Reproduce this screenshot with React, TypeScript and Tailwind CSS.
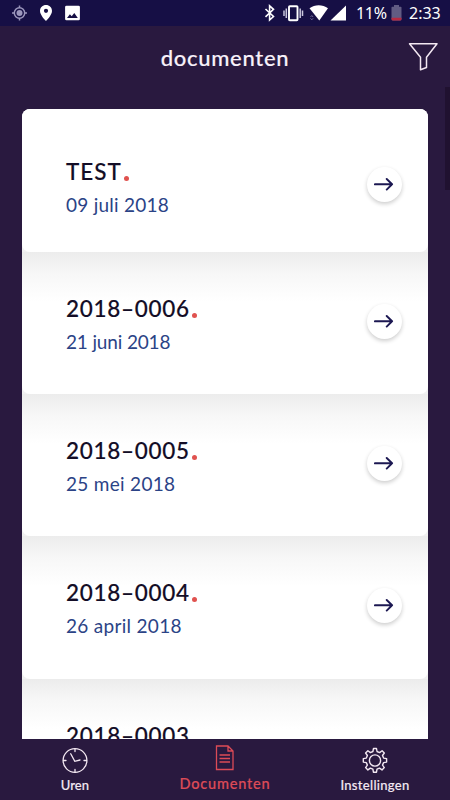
import React from "react";

type Doc = { title: string; date: string; titleSpacing: string; dateSpacing: string };

const docs: Doc[] = [
  { title: "TEST", date: "09 juli 2018", titleSpacing: "tracking-[1px]", dateSpacing: "tracking-[0.25px]" },
  { title: "2018–0006", date: "21 juni 2018", titleSpacing: "tracking-[0.7px]", dateSpacing: "tracking-[-0.15px]" },
  { title: "2018–0005", date: "25 mei 2018", titleSpacing: "tracking-[0.7px]", dateSpacing: "tracking-[0.3px]" },
  { title: "2018–0004", date: "26 april 2018", titleSpacing: "tracking-[0.7px]", dateSpacing: "tracking-[0.3px]" },
];

function StatusBar() {
  return (
    <div className="flex h-[26px] shrink-0 items-center bg-[#160f45] text-white">
      <svg width="90" height="26" viewBox="0 0 90 26" fill="none">
        <g stroke="#9c97bd" strokeWidth="1.5">
          <circle cx="19.5" cy="13" r="5.2" />
          <path d="M19.5 5.5v2.5M19.5 18v2.5M12 13h2.5M24.5 13H27" />
        </g>
        <circle cx="19.5" cy="13" r="3" fill="#9c97bd" />
        <path fillRule="evenodd" fill="#fff" d="M46 5c-3.4 0-6 2.6-6 5.900 0 4.200 6 10.100 6 10.100s6-5.900 6-10.100C52 7.600 49.400 5 46 5Zm0 3.700a2.100 2.100 0 1 1 0 4.200 2.100 2.100 0 0 1 0-4.200Z" />
        <path fillRule="evenodd" fill="#fff" d="M66.500 5.700h12q1.400 0 1.400 1.400v11.800q0 1.400-1.400 1.400h-12q-1.400 0-1.400-1.400V7.100q0-1.400 1.400-1.400ZM67 18h10.800l-3.500-4.900-2.600 3.200-1.800-2Z" />
      </svg>
      <svg className="ml-auto" width="94" height="26" viewBox="0 0 94 26" fill="none">
        <path d="m15.500 9 8 7.500-3.900 3.500V5.800l3.900 3.500-8 7.500" transform="translate(-2)" stroke="#fff" strokeWidth="1.600" />
        <rect x="37" y="6.200" width="8.500" height="14" rx="0.800" stroke="#fff" strokeWidth="1.900" />
        <path d="M34.300 8.500v9.500M48.200 8.500v9.500M32 10.500v5.500M50.500 10.500v5.500" stroke="#c9c6dd" strokeWidth="1.500" />
        <path d="M57.500 8.300c5.400-4 13-4 18.500 0L67.300 20.500Z" fill="#fff" />
        <path d="M94 5.500V20.500H78.500Z" fill="#fff" />
        <path d="m58.500 17 1.300-1.500 1.300 1.500m-2.600 1.300 1.300 1.500 1.300-1.500" stroke="#77729d" strokeWidth="0.900" />
      </svg>
      <span className="ml-[10px] w-[33px] whitespace-nowrap font-['Noto_Sans',sans-serif] text-[16px] leading-[27px] tracking-[-0.3px]">11%</span>
      <svg className="ml-[2px]" width="11" height="26" viewBox="0 0 11 26">
        <path d="M3 5h5v1.800h1.700q.8 0 .8.800V19q0 1.500-1.500 1.500H2Q.5 20.500.5 19V7.600q0-.8.800-.8H3Z" fill="#625c83" />
        <path d="M.5 17.800h10V19q0 1.500-1.500 1.500H2Q.5 20.500.5 19Z" fill="#b72a42" />
      </svg>
      <span className="ml-[7px] w-[41px] whitespace-nowrap font-['Noto_Sans',sans-serif] text-[16px] leading-[27px]">2:33</span>
    </div>
  );
}

function ArrowButton() {
  return (
    <button aria-label="Open" className="flex size-[35px] items-center justify-center rounded-full bg-white shadow-[0_2px_4px_rgba(0,0,0,0.2)]">
      <svg width="21" height="15" viewBox="0 0 21 15" fill="none" stroke="#1c1852" strokeWidth="1.900" strokeLinecap="round" strokeLinejoin="round">
        <path d="M0.900 7.300h17.200M12.700 2l5.400 5.300-5.400 5.300" />
      </svg>
    </button>
  );
}

function Dot() {
  return <span className="mb-[6px] ml-[2px] size-[5px] rounded-full bg-[#e0524f]" />;
}

function DocRow({ doc, first }: { doc: Doc; first: boolean }) {
  return (
    <div className={first ? "h-[143px] shrink-0 bg-[#f1f1f1]" : "h-[142.200px] shrink-0 bg-[#f1f1f1]"}>
      <div
        className={
          first
            ? "flex h-full items-start justify-between rounded-lg bg-white pt-[48px] pr-[26px] pl-[44px]"
            : "flex h-full items-start justify-between rounded-b-lg bg-linear-to-b from-[#ececec] via-[#f7f7f7] via-15% to-white to-35% pt-[42px] pr-[26px] pl-[44px]"
        }
      >
        <div>
          <div className="flex h-[30px] items-end">
            <span className={"text-[22.500px] leading-[30px] font-medium text-[#130d26] [-webkit-text-stroke:0.15px_#130d26] " + doc.titleSpacing}>{doc.title}</span>
            <Dot />
          </div>
          <div className={"mt-[3px] text-[19px] leading-[30px] text-[#2b4386] " + doc.dateSpacing}>{doc.date}</div>
        </div>
        <div className="mt-[10px]">
          <ArrowButton />
        </div>
      </div>
    </div>
  );
}

function ClockIcon() {
  return (
    <svg width="27" height="27" viewBox="0 0 27 27" fill="none" stroke="#f3e8f2" strokeWidth="1.300" strokeLinecap="round">
      <circle cx="13" cy="13.500" r="11.900" />
      <path d="M13 2v2.500M13 22.500V25M1.500 13.500h2.500M22 13.500H24.500M8.700 6.800l4.100 7.500 5.200-1.300" />
    </svg>
  );
}

function DocumentIcon() {
  return (
    <svg width="20" height="27" viewBox="0 0 20 27" fill="none" stroke="#dc4b57" strokeWidth="1.300">
      <path d="M1.500 2h11.500l5 5v18.500H1.500ZM13 2v5h5M4.500 11h10.500M4.500 14.500h10.500M4.500 18h10.500" />
    </svg>
  );
}

function GearIcon() {
  return (
    <svg width="27" height="27" viewBox="0.500 0 27 27" fill="none" stroke="#f3e8f2" strokeWidth="1.400" strokeLinejoin="round">
      <circle cx="13.500" cy="13.500" r="5.600" />
      <path d="M12 1.500h3l.5 3 2.600 1.100 2.500-1.800 2.200 2.200-1.800 2.500 1.100 2.600 3 .5v3.500l-3 .5-1.100 2.500 1.800 2.500-2.300 2.300-2.500-1.800-2.500 1.100-.5 3h-3.100l-.5-3-2.500-1.100-2.500 1.800-2.300-2.300 1.800-2.500-1.100-2.500-3-.5v-3.500l3-.5 1.100-2.600-1.800-2.500 2.300-2.200 2.500 1.800 2.500-1.100Z" />
    </svg>
  );
}

export default function App() {
  return (
    <div className="relative flex h-[800px] w-[450px] flex-col overflow-hidden bg-[#29193f] font-['Lato',sans-serif]">
      <StatusBar />
      <header className="grid h-[83px] shrink-0 grid-cols-[1fr_auto_1fr] items-start pt-[14px]">
        <span />
        <h1 className="text-[22px] leading-[35px] font-medium tracking-[0.700px] text-[#f8f1fa] [-webkit-text-stroke:0.15px_#f8f1fa]">documenten</h1>
        <svg className="mt-[2px] mr-[11px] justify-self-end" width="31" height="30" viewBox="0 0 31 30" fill="none" stroke="#f3e8f2" strokeWidth="1.500" strokeLinejoin="round">
          <path d="M1.500 1.800h27.500L18.500 15.200V25.500l-6 2.300V15.200Z" />
        </svg>
      </header>
      <main className="mx-[22px] flex h-[630px] w-[406px] shrink-0 flex-col overflow-hidden rounded-t-lg bg-white">
        {docs.map((doc, i) => (
          <DocRow key={doc.title} doc={doc} first={i === 0} />
        ))}
        <div className="h-[142px] shrink-0 bg-linear-to-b from-[#ececec] via-[#f7f7f7] via-15% to-white to-35% pt-[42px] pl-[44px] text-[22.500px] leading-[30px] font-medium tracking-[0.700px] text-[#130d26] [-webkit-text-stroke:0.15px_#130d26]">
          2018–0003
        </div>
      </main>
      <nav className="grid h-[61px] shrink-0 grid-cols-3 text-center text-[13px] leading-[18px] font-medium text-[#f3e8f2]">
        <div className="flex flex-col items-center pt-[8px]">
          <ClockIcon />
          <span className="mt-[2px] tracking-[0.100px] [-webkit-text-stroke:0.15px_#f3e8f2]">Uren</span>
        </div>
        <div className="flex flex-col items-center pt-[5px] text-[#dc4b57]">
          <DocumentIcon />
          <span className="mt-[4px] text-[14.500px] tracking-[0.800px] [-webkit-text-stroke:0.2px_#dc4b57]">Documenten</span>
        </div>
        <div className="flex flex-col items-center pt-[8px]">
          <GearIcon />
          <span className="mt-[2px] tracking-[0.300px] [-webkit-text-stroke:0.15px_#f3e8f2]">Instellingen</span>
        </div>
      </nav>
      <div className="absolute top-[87px] right-0 h-[103px] w-[5px] bg-[#201130]" />
    </div>
  );
}
